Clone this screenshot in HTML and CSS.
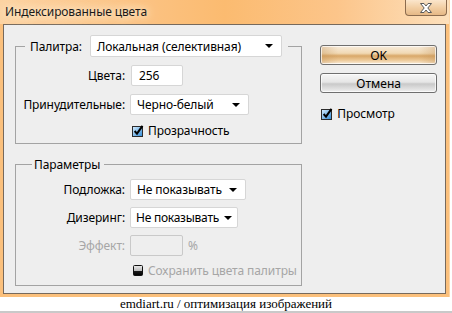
FILE: index.html
```html
<!doctype html>
<html lang="ru">

<head>
  <meta charset="UTF-8" />
  <title>Индексированные цвета</title>
  <link rel="stylesheet" href="styles.css">
</head>

<body>
  <div class="window">
    <div class="titlebar">
      <span class="title">Индексированные цвета</span>
      <button class="close">
        <svg width="14" height="10" viewBox="0 0 14 10">
          <path d="M1.5 0.5 H5 L7 3 L9 0.5 H12.5 L8.8 5 L12.5 9.5 H9 L7 7 L5 9.5 H1.5 L5.2 5 Z" fill="#fff" stroke="#5a5a5a" stroke-width="1" stroke-linejoin="round" />
        </svg>
      </button>
    </div>

    <div class="client">
      <div class="options">
        <fieldset class="group group-palette">
          <legend>
            <span class="legend-label">Палитра:</span>
            <div class="select select-palette"><span>Локальная (селективная)</span><i class="caret"></i></div>
          </legend>
          <div class="form">
            <label>Цвета:</label>
            <div class="input input-colors">256</div>
            <label>Принудительные:</label>
            <div class="select select-forced"><span>Черно-белый</span><i class="caret"></i></div>
            <span></span>
            <div class="check">
              <svg class="box" width="12" height="12" viewBox="0 0 12 12">
                <defs>
                  <linearGradient id="blue1" x1="0" y1="0" x2="1" y2="1">
                    <stop offset="0" stop-color="#d9efff" />
                    <stop offset="1" stop-color="#2f8ad6" />
                  </linearGradient>
                </defs>
                <rect x="0.5" y="1.5" width="10" height="10" fill="url(#blue1)" stroke="#2b2b2b" />
                <path d="M2.6 6 L5 8.6 L10.5 0.8" fill="none" stroke="#000" stroke-width="2" />
              </svg>
              <span>Прозрачность</span>
            </div>
          </div>
        </fieldset>

        <fieldset class="group group-params">
          <legend>Параметры</legend>
          <div class="form form-params">
            <label>Подложка:</label>
            <div class="select select-matte"><span>Не показывать</span><i class="caret"></i></div>
            <label>Дизеринг:</label>
            <div class="select select-dither"><span>Не показывать</span><i class="caret"></i></div>
            <label class="disabled">Эффект:</label>
            <div class="amount">
              <div class="input input-disabled"></div>
              <span class="disabled">%</span>
            </div>
            <span></span>
            <div class="check">
              <svg class="box" width="12" height="12" viewBox="0 0 12 12">
                <defs>
                  <linearGradient id="gray1" x1="0" y1="0" x2="0" y2="1">
                    <stop offset="0" stop-color="#ececec" />
                    <stop offset="0.5" stop-color="#bdbdbd" />
                    <stop offset="0.6" stop-color="#1a1a1a" />
                    <stop offset="1" stop-color="#000" />
                  </linearGradient>
                </defs>
                <rect x="1.5" y="0.5" width="9" height="10" rx="1" fill="url(#gray1)" stroke="#111" />
              </svg>
              <span class="disabled">Сохранить цвета палитры</span>
            </div>
          </div>
        </fieldset>
      </div>

      <div class="actions">
        <button class="btn btn-ok">OK</button>
        <button class="btn">Отмена</button>
        <div class="check check-preview">
          <svg class="box" width="12" height="12" viewBox="0 0 12 12">
            <defs>
              <linearGradient id="blue2" x1="0" y1="0" x2="1" y2="1">
                <stop offset="0" stop-color="#d9efff" />
                <stop offset="1" stop-color="#2f8ad6" />
              </linearGradient>
            </defs>
            <rect x="0.5" y="1.5" width="10" height="10" fill="url(#blue2)" stroke="#2b2b2b" />
            <path d="M2.6 6 L5 8.6 L10.5 0.8" fill="none" stroke="#000" stroke-width="2" />
          </svg>
          <span>Просмотр</span>
        </div>
      </div>
    </div>
  </div>

  <div class="caption">emdiart.ru / оптимизация изображений</div>
  <div class="rule"></div>
</body>

</html>
```

FILE: styles.css
```css
* {
  box-sizing: border-box;
}

body {
  margin: 0;
  background: #fff;
  font-family: 'Noto Sans', 'Segoe UI', Tahoma, sans-serif;
  font-size: 12px;
  letter-spacing: -0.1px;
  color: #000;
}

.window {
  width: 450px;
  padding: 0 3px 3px;
  background: #fbc07c;
  border-right: 1px solid #fcd6a8;
}

.titlebar {
  height: 24px;
  margin: 0 -3px;
  padding-left: 5px;
  display: flex;
  justify-content: space-between;
  align-items: flex-start;
  background: linear-gradient(to right, #fcd3a2, #fbc384 30%, #fbbb70 50%, #fcc58a 75%, #fde0bc);
}

.title {
  margin-top: 4px;
  line-height: 16px;
  color: #1a1a1a;
  text-shadow: 0 0 6px #ffe9cf, 0 0 10px #ffe9cf, 0 0 14px #ffe4c4;
}

.close {
  width: 42px;
  height: 16px;
  margin-right: 2px;
  padding: 0;
  border: 1px solid #8b6b4e;
  border-top: none;
  border-radius: 0 0 4px 4px;
  background: linear-gradient(#fbe6cc, #f2cfa4 50%, #e6b886);
  display: flex;
  justify-content: center;
  align-items: center;
}

.client {
  height: 270px;
  padding: 10px 8px 0 11px;
  display: flex;
  gap: 18px;
  background: #eeeeee;
  border: 1px solid #76695c;
}

.options {
  width: 288px;
}

.group {
  margin: 0;
  padding: 0;
  border: 1px solid #a3a3a3;
}

.group legend {
  margin-left: 9px;
  padding: 0 6px 0 5px;
  display: flex;
  align-items: center;
}

.group-palette legend .select {
  margin-left: 8px;
}

.group-params {
  margin-top: 13px;
}

.group-params legend {
  margin-left: 16px;
  padding: 0 4px 0 2px;
  line-height: 15px;
}

.form {
  padding: 8px 0 5px;
  display: grid;
  grid-template-columns: 109px auto;
  column-gap: 5px;
  row-gap: 8px;
  align-items: center;
  justify-items: start;
}

.form-params {
  padding: 7px 0 7px;
  row-gap: 7px;
}

.form label {
  justify-self: end;
  white-space: nowrap;
}

.disabled {
  color: #a6a6a6;
}

.select {
  height: 21px;
  padding: 0 8px 0 6px;
  display: flex;
  justify-content: space-between;
  align-items: center;
  gap: 4px;
  white-space: nowrap;
  background: #fff;
  border: 1px solid #d6d6d6;
  border-radius: 2px;
}

.select-palette {
  width: 192px;
  height: 22px;
}

.select-forced {
  width: 119px;
}

.select-matte {
  width: 116px;
}

.select-dither {
  width: 108px;
  padding: 0 5px 0 5px;
  letter-spacing: -0.25px;
}

.caret {
  flex: none;
  width: 0;
  height: 0;
  border-left: 4px solid transparent;
  border-right: 4px solid transparent;
  border-top: 4px solid #000;
}

.input {
  height: 21px;
  padding: 0 7px;
  line-height: 19px;
  background: #fff;
  border: 1px solid #d6d6d6;
  border-radius: 2px;
}

.input-colors {
  width: 52px;
  margin-left: 1px;
}

.amount {
  display: flex;
  align-items: center;
  gap: 5px;
}

.input-disabled {
  width: 53px;
  background: #eeeeee;
  border-color: #c9c9c9;
}

.check {
  height: 15px;
  margin-left: 2px;
  display: flex;
  align-items: center;
  gap: 4px;
  white-space: nowrap;
}

.actions {
  padding-top: 10px;
  width: 117px;
  display: flex;
  flex-direction: column;
  gap: 8px;
}

.btn {
  height: 20px;
  padding: 0;
  font: inherit;
  color: #000;
  border: 1px solid #6f6f6f;
  border-radius: 3px;
  background: linear-gradient(#f6f6f6, #e6e6e6 45%, #c9c9c9 55%, #dedede 80%, #f0f0f0);
  box-shadow: inset 0 0 0 1px rgba(255, 255, 255, 0.7);
}

.btn-ok {
  background:
    linear-gradient(to right, rgba(190, 140, 80, 0.35), rgba(255, 255, 255, 0) 15%, rgba(255, 255, 255, 0) 85%, rgba(190, 140, 80, 0.35)),
    linear-gradient(#f7ecdd, #f1d9b4 40%, #d9a869 55%, #ecc896 78%, #fbeedc);
}

.check-preview {
  margin: 5px 0 0 1px;
}

.caption {
  height: 14px;
  text-align: center;
  font-family: 'Liberation Serif', 'Times New Roman', serif;
  font-size: 13px;
  letter-spacing: 0;
  line-height: 14px;
}

.rule {
  height: 2px;
  background: #c9c9c9;
}
```
